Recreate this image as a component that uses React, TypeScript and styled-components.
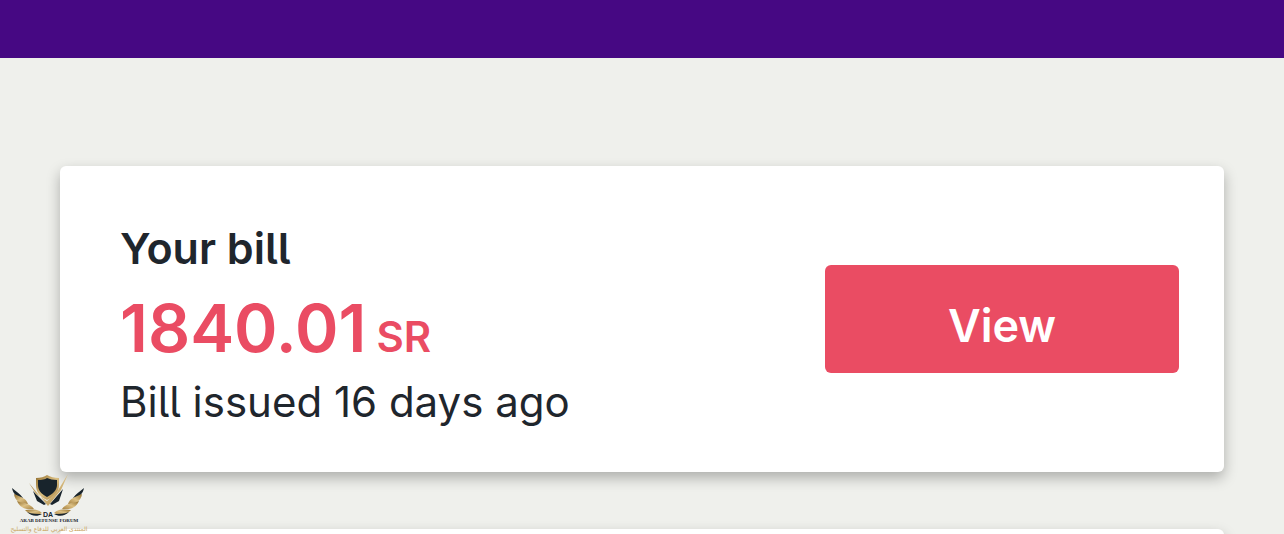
import React from "react";
import styled, { createGlobalStyle } from "styled-components";

const GlobalStyle = createGlobalStyle`
  *, *::before, *::after { box-sizing: border-box; }
  body {
    margin: 0;
    background: #eff0ec;
    color: #1f262d;
    font-family: Inter, "Liberation Sans", sans-serif;
    font-feature-settings: "cv05";
  }
`;

const Page = styled.div`
  position: relative;
  display: flex;
  flex-direction: column;
  height: 100vh;
  overflow: hidden;
`;

const TopBar = styled.header`
  flex: none;
  height: 58px;
  background: #460883;
`;

const Content = styled.main`
  display: flex;
  flex-direction: column;
  gap: 57px;
  padding: 108px 60px 0;
`;

const Card = styled.section`
  display: flex;
  align-items: center;
  justify-content: space-between;
  gap: 40px;
  flex: none;
  min-height: 160px;
  padding: 46px 45px 46px 60px;
  border-radius: 6px;
  background: #fff;
  box-shadow: 0 6px 14px rgba(0, 0, 0, 0.28);
`;

const Summary = styled.div`
  display: flex;
  flex-direction: column;
  padding-top: 6px;
`;

const Title = styled.h2`
  margin: 0;
  font-size: 43px;
  font-weight: 600;
  line-height: 60px;
`;

const Amount = styled.p`
  display: flex;
  align-items: baseline;
  gap: 10px;
  margin: 0;
  color: #ea4c63;
  font-size: 66px;
  font-weight: 600;
  line-height: 100px;
`;

const Currency = styled.span`
  font-size: 42px;
  line-height: 1;
`;

const Issued = styled.p`
  margin: 0;
  font-size: 42px;
  line-height: 48px;
`;

const ViewButton = styled.button`
  flex: none;
  width: 354px;
  height: 108px;
  padding: 12px 0 0;
  border: 0;
  border-radius: 6px;
  background: #ea4c63;
  color: #fff;
  font: inherit;
  font-size: 45px;
  font-weight: 600;
  cursor: pointer;
`;

const Watermark = styled.div`
  position: absolute;
  left: 10px;
  bottom: 0;
  display: flex;
  flex-direction: column;
  align-items: center;
  width: 78px;
  white-space: nowrap;
`;

const WatermarkName = styled.span`
  color: #18242c;
  font-family: "Liberation Serif", serif;
  font-size: 5px;
  font-weight: 700;
  line-height: 6px;
`;

const WatermarkArabic = styled.span`
  color: #c9a661;
  font-family: "DejaVu Sans", sans-serif;
  font-size: 6px;
  line-height: 10px;
`;

function Emblem() {
  return (
    <svg width="78" height="44" viewBox="0 0 78 44" aria-hidden="true">
      <defs>
        <linearGradient id="gold" x1="0" x2="1" y1="0" y2="1">
          <stop offset="0" stopColor="#8f6c2b" />
          <stop offset="0.5" stopColor="#dcc083" />
          <stop offset="1" stopColor="#a58141" />
        </linearGradient>
        <g id="wing">
          <path fill="#18242c" d="M2 14 C3 20 7 23 13 24 C10 20 7 18 2 14Z" />
          <path fill="url(#gold)" d="M4 20 C5 27 10 30 18 30 C16 24 11 23 4 20Z" />
          <path fill="url(#gold)" d="M7 27 C10 34 16 36 24 35 C20 29 14 30 7 27Z" />
          <path fill="url(#gold)" d="M15 36 C19 41 26 42 32 39 C27 34 22 36 15 36Z" />
          <path fill="#18242c" d="M17 38 C21 42 27 43 32 40 C27 40 22 40 17 38Z" />
        </g>
      </defs>
      <use href="#wing" />
      <use href="#wing" transform="translate(76 0) scale(-1 1)" />
      <path fill="url(#gold)" d="M26 4 Q33 4 37 1 Q42 4 49 4 V11 C49 18 44 23 37 26 C30 23 26 18 26 11Z" />
      <path fill="#18242c" d="M28 6 Q34 6 37 4 Q41 6 47 6 V11 C47 16 43 20 37 23 C31 20 28 16 28 11Z" />
      <path fill="#18242c" d="M23 17 L36 30 L34 31 L27 27Z M53 15 L49 27 L42 31 L40 30Z" />
      <path fill="url(#gold)" d="M19 9 L26 20 L37 27 L47 18 L58 0 L51 16 L38 32Z" />
      <text
        x="38"
        y="43"
        textAnchor="middle"
        fill="#18242c"
        fontFamily="Liberation Sans, sans-serif"
        fontSize="7"
        fontWeight="700"
      >
        DA
      </text>
    </svg>
  );
}

export default function App() {
  return (
    <>
      <GlobalStyle />
      <Page>
        <TopBar />
        <Content>
          <Card>
            <Summary>
              <Title>Your bill</Title>
              <Amount>
                1840.01<Currency>SR</Currency>
              </Amount>
              <Issued>Bill issued 16 days ago</Issued>
            </Summary>
            <ViewButton type="button">View</ViewButton>
          </Card>
          <Card />
        </Content>
        <Watermark>
          <Emblem />
          <WatermarkName>ARAB DEFENSE FORUM</WatermarkName>
          <WatermarkArabic lang="ar" dir="rtl">
            المنتدى العربي للدفاع والتسليح
          </WatermarkArabic>
        </Watermark>
      </Page>
    </>
  );
}
